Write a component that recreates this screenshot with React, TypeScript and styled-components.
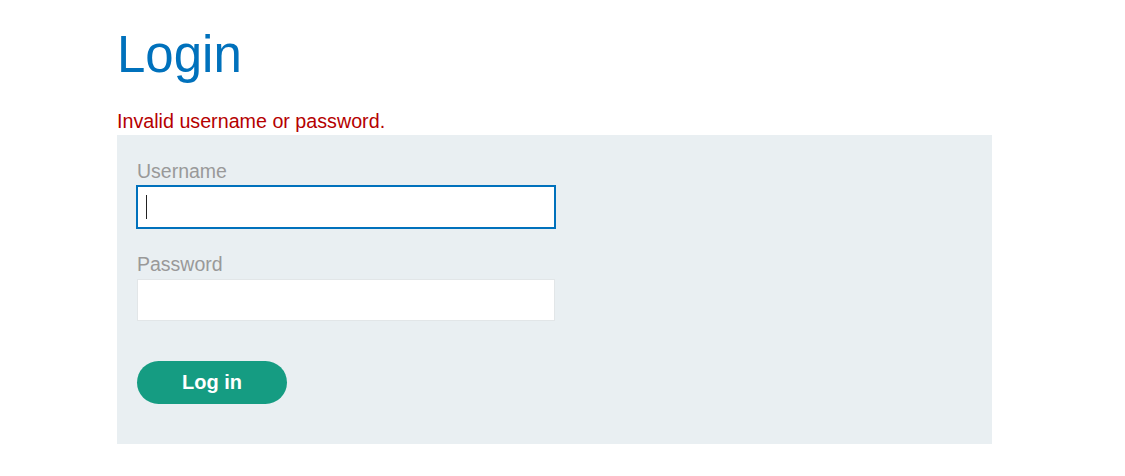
import React from "react";
import styled, { createGlobalStyle } from "styled-components";

const GlobalStyle = createGlobalStyle`
  html, body {
    margin: 0;
    padding: 0;
    background: #ffffff;
  }
  body {
    font-family: "Liberation Sans", Arial, Helvetica, sans-serif;
  }
  * { box-sizing: border-box; }
`;

const Page = styled.main`
  width: 992px;
  padding-left: 117px;
`;

const Title = styled.h1`
  margin: 0;
  padding-top: 25px;
  font-size: 51px;
  line-height: 60px;
  font-weight: normal;
  color: #0071bc;
`;

const ErrorText = styled.p`
  margin: 25px 0 3px;
  font-size: 19.7px;
  line-height: 22px;
  color: #b50000;
`;

const Panel = styled.form`
  display: flex;
  flex-direction: column;
  align-items: flex-start;
  background: #e9eff2;
  padding: 25px 20px 40px;
`;

const Label = styled.label<{ $spaced?: boolean }>`
  display: block;
  margin-top: ${(p) => (p.$spaced ? "25px" : "0")};
  font-size: 19.5px;
  line-height: 22px;
  height: 22px;
  color: #999999;
`;

const Field = styled.div`
  position: relative;
  margin-top: 4px;
`;

const Input = styled.input<{ $active?: boolean }>`
  display: block;
  width: 418px;
  height: 42px;
  padding: 0 8px;
  font-family: "Liberation Sans", Arial, sans-serif;
  font-size: 20px;
  color: #333333;
  background: #ffffff;
  border: 1px solid ${(p) => (p.$active ? "#0071bc" : "#e2e6e8")};
  box-shadow: ${(p) => (p.$active ? "0 0 0 1px #0071bc" : "none")};
  border-radius: 0;
  outline: none;
  caret-color: transparent;
`;

const Caret = styled.span`
  position: absolute;
  left: 9px;
  top: 9px;
  width: 1px;
  height: 24px;
  background: #222222;
  pointer-events: none;
`;

const Button = styled.button`
  margin-top: 40px;
  width: 150px;
  height: 43px;
  border: none;
  border-radius: 22px;
  background: #159c82;
  color: #ffffff;
  font-family: "Liberation Sans", Arial, sans-serif;
  font-size: 20px;
  font-weight: bold;
  cursor: pointer;
`;

export default function App() {
  return (
    <>
      <GlobalStyle />
      <Page>
        <Title>Login</Title>
        <ErrorText>Invalid username or password.</ErrorText>
        <Panel onSubmit={(e) => e.preventDefault()}>
          <Label htmlFor="username">Username</Label>
          <Field>
            <Input id="username" name="username" type="text" $active autoFocus />
            <Caret />
          </Field>
          <Label htmlFor="password" $spaced>
            Password
          </Label>
          <Field>
            <Input id="password" name="password" type="password" />
          </Field>
          <Button type="submit">Log in</Button>
        </Panel>
      </Page>
    </>
  );
}
